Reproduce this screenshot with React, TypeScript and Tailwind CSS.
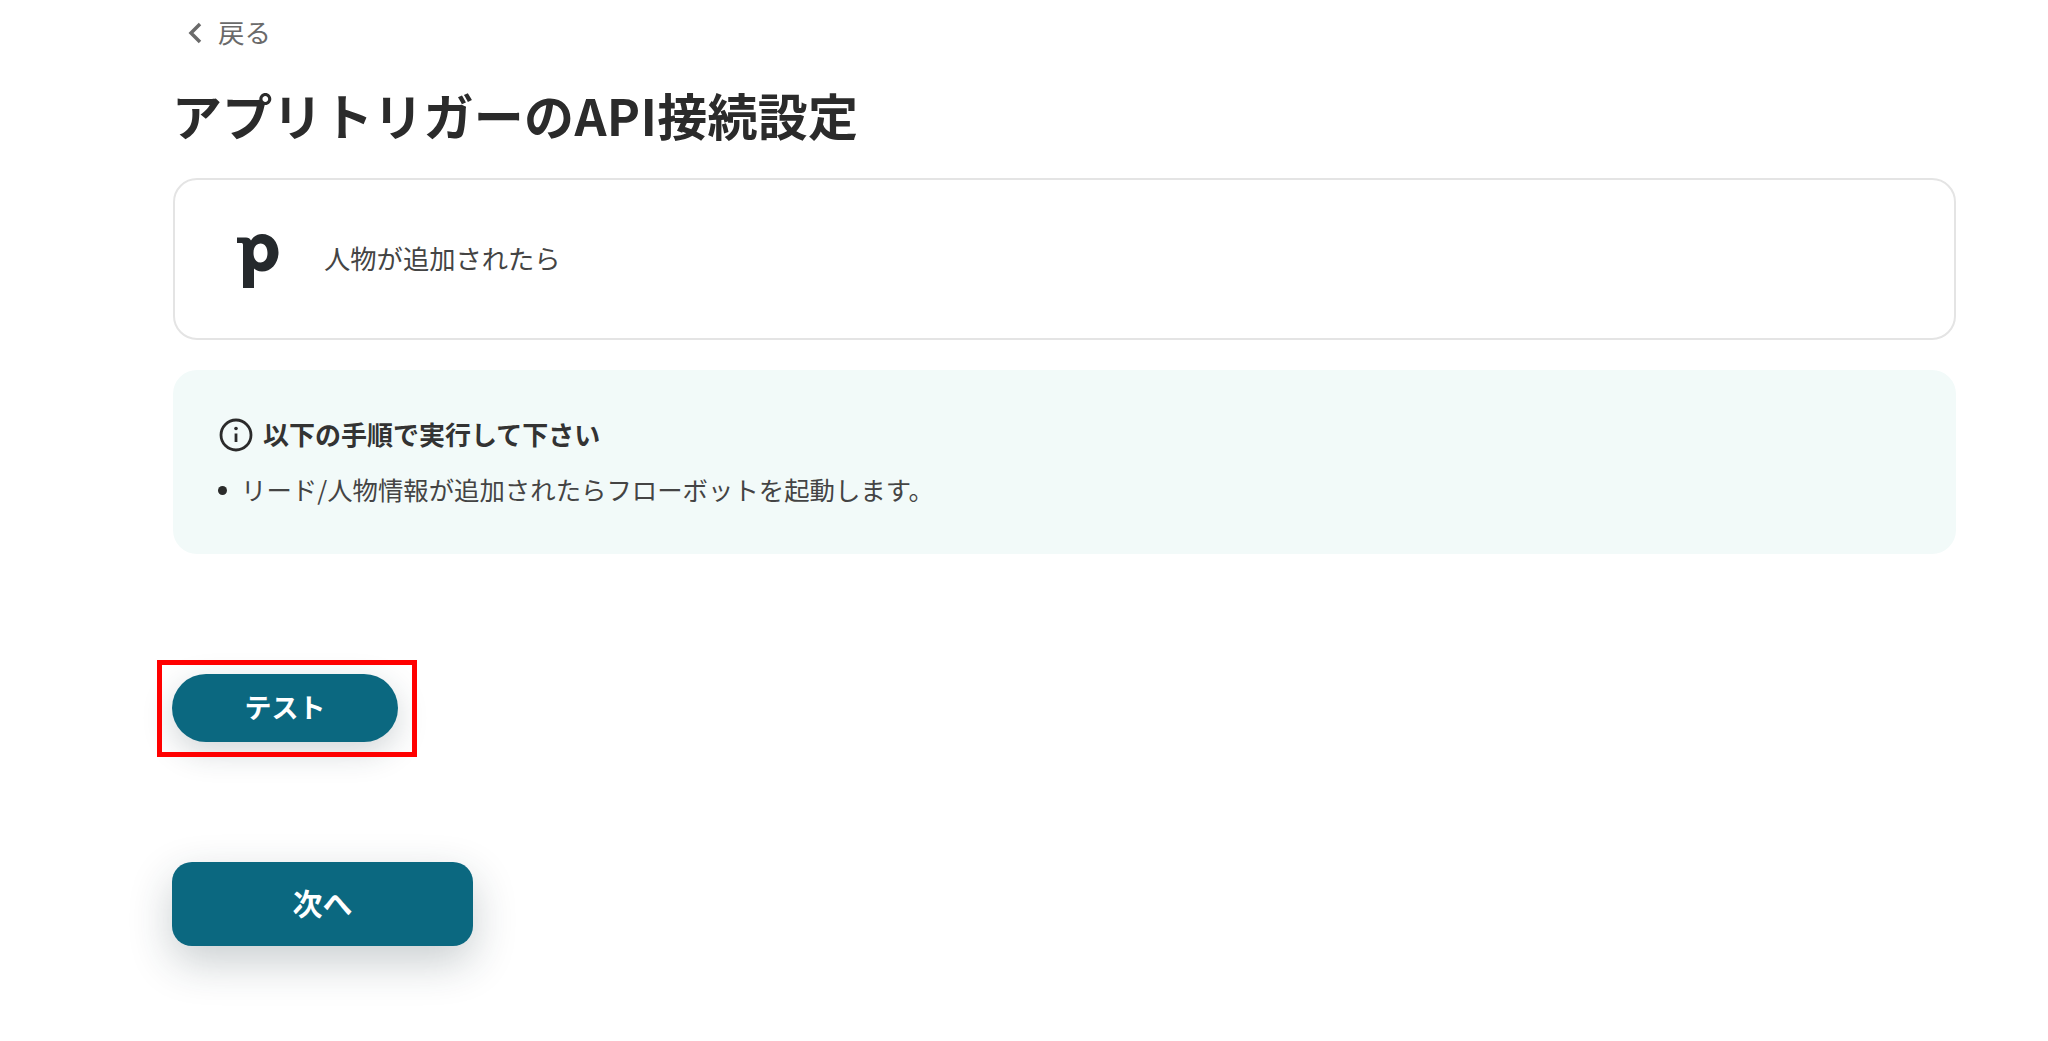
const font = { fontFamily: '"Noto Sans CJK JP", "Noto Sans", sans-serif' }

const App = () => {
  return (
    <div className="min-h-[1041px] bg-white pl-[172px] pr-[92px] text-[#333333]" style={font}>
      <div className="flex h-[66px] items-center pl-[14px] text-[#6a6a6a]">
        <svg width="20" height="24" viewBox="0 0 20 24" fill="none" stroke="currentColor" strokeWidth="3.500" className="mr-[12px]">
          <path d="M14 3 L5 12 L14 21" />
        </svg>
        <span className="mb-[2px] text-[26.500px] leading-none">戻る</span>
      </div>

      <h1 className="mt-[15px] h-[66px] text-[50px] font-bold leading-[66px] tracking-[0.006em] text-[#2b2b2b]">アプリトリガーのAPI接続設定</h1>

      <div className="mt-[31px] ml-[1px] flex h-[162px] items-center rounded-[24px] border-2 border-[#e4e4e4] pl-[62px]">
        <svg width="42" height="54" viewBox="0 0 42 54" className="mt-[4px] shrink-0 text-[#25292c]" fill="currentColor">
          <path fillRule="evenodd" d="M0 3.500H9C11.500 3.500 13 4.500 14 6.500C16.500 2.500 20 0 25 0C34.500 0 41.500 8 41.500 18.500C41.500 29 34.500 37.500 25 37.500C21 37.500 18.500 36 17 34.500V54H6V11C6 9.500 5.500 9 4 9H0ZM16.500 19C16.500 24.500 19 28.500 23.500 28.500C28 28.500 30.500 24.500 30.500 19C30.500 13.500 28 9.500 23.500 9.500C19 9.500 16.500 13.500 16.500 19Z" />
        </svg>
        <span className="mb-[2px] ml-[45px] text-[26.300px] leading-none text-[#444444]">人物が追加されたら</span>
      </div>

      <div className="mt-[30px] ml-[1px] h-[184px] rounded-[24px] bg-[#f2faf9] pl-[47px] pt-[48px]">
        <div className="flex h-[34px] items-center">
          <svg width="34" height="34" viewBox="0 0 34 34" fill="none" stroke="#2b2b2b" strokeWidth="2.800" className="-ml-[1px] shrink-0">
            <circle cx="17" cy="17" r="15" />
            <path d="M17 15.500V24" />
            <circle cx="17" cy="10.500" r="1.800" fill="#2b2b2b" stroke="none" />
          </svg>
          <span className="mb-[2px] ml-[10px] text-[26px] font-bold leading-none text-[#333333]">以下の手順で実行して下さい</span>
        </div>
        <ul className="mt-[21px] flex h-[34px] items-center">
          <li className="flex items-center">
            <span className="-ml-[2px] h-[9px] w-[9px] rounded-full bg-[#2b2b2b]" />
            <span className="ml-[14px] text-[25.400px] leading-none text-[#444444]">リード/人物情報が追加されたらフローボットを起動します。</span>
          </li>
        </ul>
      </div>

      <div className="relative mt-[120px] w-fit">
        <button className="flex h-[68px] w-[226px] items-center justify-center rounded-full bg-[#0b6880] pb-[1px] text-[27px] font-bold text-white shadow-[0_10px_32px_rgba(30,50,60,0.2)]">テスト</button>
        <span className="absolute -left-[15px] -top-[14px] h-[97px] w-[260px] border-[5px] border-[#ff0000]" />
      </div>

      <button className="mt-[120px] flex h-[84px] w-[301px] items-center justify-center rounded-[20px] bg-[#0b6880] pb-[3px] text-[30px] font-bold text-white shadow-[0_16px_44px_rgba(30,50,60,0.24)]">次へ</button>
    </div>
  )
}

export default App
